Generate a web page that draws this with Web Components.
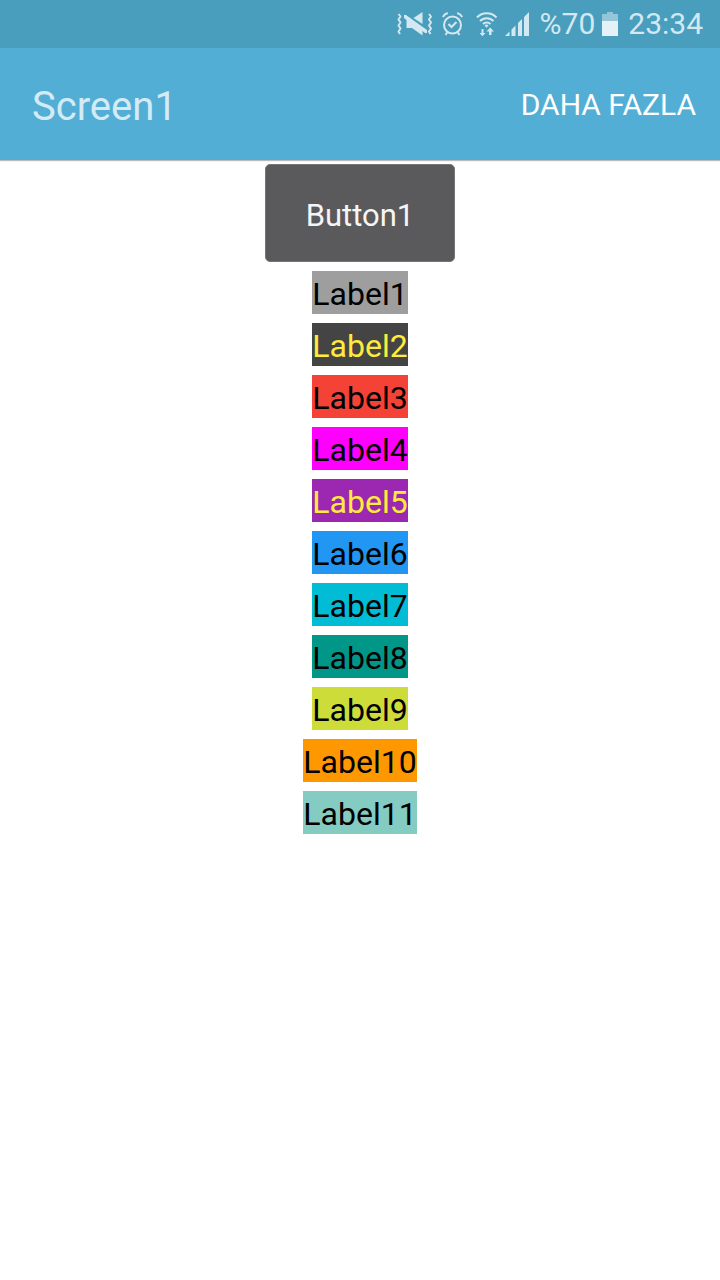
<!DOCTYPE html>
<html lang="tr">
<head>
<meta charset="utf-8">
<meta name="viewport" content="width=device-width, initial-scale=1">
<title>Screen1</title>
<style>
    body {
        margin: 0;
        background: #fff;
        color: #000;
        font-family: Roboto, "Liberation Sans", sans-serif;
    }
</style>
</head>
<body>
<app-screen>
    <status-bar slot="top" battery="%70" time="23:34"></status-bar>
    <title-bar slot="top" heading="Screen1">DAHA FAZLA</title-bar>

    <app-button>Button1</app-button>
    <color-label color="#9e9e9e">Label1</color-label>
    <color-label color="#444444" text="#ffeb3b">Label2</color-label>
    <color-label color="#f44336">Label3</color-label>
    <color-label color="#ff00ff">Label4</color-label>
    <color-label color="#9c27b0" text="#ffeb3b">Label5</color-label>
    <color-label color="#2196f3">Label6</color-label>
    <color-label color="#00bcd4">Label7</color-label>
    <color-label color="#009688">Label8</color-label>
    <color-label color="#cddc39">Label9</color-label>
    <color-label color="#ff9800">Label10</color-label>
    <color-label color="#84ccc2">Label11</color-label>
</app-screen>

<script>
/**
 * Screen: bars on top, centered column of components below
 */
class AppScreen extends HTMLElement {
    constructor() {
        super();
        this.attachShadow({ mode: 'open' });
    }

    connectedCallback() {
        this.shadowRoot.innerHTML = `
            <style>
                :host {
                    display: flex;
                    flex-direction: column;
                    min-height: 100vh;
                }

                main {
                    display: flex;
                    flex-direction: column;
                    align-items: center;
                    gap: 9px;
                    padding: 4px 0;
                }
            </style>

            <header><slot name="top"></slot></header>
            <main><slot></slot></main>
        `;
    }
}

/**
 * Phone status bar with icons, battery level and clock
 */
class StatusBar extends HTMLElement {
    constructor() {
        super();
        this.attachShadow({ mode: 'open' });
    }

    connectedCallback() {
        this.shadowRoot.innerHTML = `
            <style>
                :host {
                    display: flex;
                    align-items: center;
                    justify-content: flex-end;
                    height: 48px;
                    padding-right: 17px;
                    background: #499dbd;
                    color: #d3e8f0;
                    font-size: 30px;
                    line-height: 48px;
                }

                svg {
                    flex: none;
                    fill: currentColor;
                }

                .line {
                    fill: none;
                    stroke: currentColor;
                    stroke-width: 2;
                }

                .alarm { margin-left: 8px; }
                .wifi { margin-left: 12px; }
                .signal { margin: 0 11px 0 7px; }
                .battery { margin: 0 10px 0 7px; }
            </style>

            <svg class="mute" width="37" height="48" viewBox="0 0 37 48" aria-hidden="true">
                <path class="line" stroke-linejoin="round" d="M1.500 14l2 2.500-2 3 2 3-2 3 2 3-2 3 1.500 2.500M32 14l2 2.500-2 3 2 3-2 3 2 3-2 3 1.500 2.500"/>
                <path d="M16.500 18l9-6v12zM7 15h2l21 15v3h-2l-2.500-2v4.500L15 28H9.500v-8L7 18z"/>
            </svg>
            <svg class="alarm" width="22" height="48" viewBox="0 0 22 48" aria-hidden="true">
                <circle class="line" cx="10.500" cy="25" r="8.500"/>
                <path class="line" d="M6.500 24l3 3 5-5M.800 17a8 8 0 0 1 5-4M20.200 17a8 8 0 0 0-5-4M5.500 32l-2 3M15.500 32l2 3"/>
            </svg>
            <svg class="wifi" width="22" height="48" viewBox="0 0 22 48" aria-hidden="true">
                <path class="line" d="M1 17.500a13.500 13.500 0 0 1 19.500 0M4 21a9.500 9.500 0 0 1 13.500 0M7 24a5.300 5.300 0 0 1 7.500 0"/>
                <path d="M8.500 25.500a3 3 0 0 1 4 0l-2 2.200zM5.500 29h2v4H9.500l-3 3.300-3-3.300h2zM13 35h2.500v-3.500H18L14.200 27.500l-3.700 4H13z"/>
            </svg>
            <svg class="signal" width="24" height="48" viewBox="0 0 24 48" aria-hidden="true">
                <path d="M0 36l4.500-4.500V36zM6.500 36v-6.500l4-4V36zM13 36V23l4-4v17zM19 36V17l5-5v24z"/>
            </svg>
            <span>${this.getAttribute('battery')}</span>
            <svg class="battery" width="16" height="48" viewBox="0 0 16 48" aria-hidden="true">
                <path fill="#94c5d8" d="M0 14h5v-2h6v2h5v7H0z"/>
                <path fill="#e4f1f6" d="M0 21h16v15H0z"/>
            </svg>
            <time>${this.getAttribute('time')}</time>
        `;
    }
}

/**
 * Title bar with heading and menu button
 */
class TitleBar extends HTMLElement {
    constructor() {
        super();
        this.attachShadow({ mode: 'open' });
    }

    connectedCallback() {
        this.shadowRoot.innerHTML = `
            <style>
                :host {
                    display: flex;
                    align-items: center;
                    justify-content: space-between;
                    height: 112px;
                    padding: 0 24px 0 32px;
                    background: #53aed6;
                    box-shadow: 0 1px 1px #bbb;
                }

                h1 {
                    margin: 0;
                    padding-top: 6px;
                    color: #d4ebf5;
                    font-size: 40px;
                    font-weight: 400;
                    line-height: 48px;
                }

                button {
                    padding: 0;
                    border: 0;
                    background: none;
                    color: #fff;
                    font: inherit;
                    font-size: 30px;
                    cursor: pointer;
                }
            </style>

            <h1>${this.getAttribute('heading')}</h1>
            <button type="button"><slot></slot></button>
        `;
    }
}

/**
 * Dark push button
 */
class AppButton extends HTMLElement {
    constructor() {
        super();
        this.attachShadow({ mode: 'open' });
    }

    connectedCallback() {
        this.shadowRoot.innerHTML = `
            <style>
                :host {
                    display: block;
                }

                button {
                    display: block;
                    padding: 31px 40px 25px;
                    border: 1px solid #767677;
                    border-radius: 5px;
                    background: #5a5a5c;
                    color: #f5f5f5;
                    font: inherit;
                    font-size: 31px;
                    line-height: 40px;
                    cursor: pointer;
                }

                button:active {
                    background: #464648;
                }
            </style>

            <button type="button"><slot></slot></button>
        `;
    }
}

/**
 * Text label with its own background and text color
 */
class ColorLabel extends HTMLElement {
    constructor() {
        super();
        this.attachShadow({ mode: 'open' });
    }

    connectedCallback() {
        this.shadowRoot.innerHTML = `
            <style>
                :host {
                    display: block;
                    padding-top: 4px;
                    background: ${this.getAttribute('color')};
                    color: ${this.getAttribute('text') || '#000'};
                    font-size: 32px;
                    line-height: 39px;
                }
            </style>

            <slot></slot>
        `;
    }
}

customElements.define('app-screen', AppScreen);
customElements.define('status-bar', StatusBar);
customElements.define('title-bar', TitleBar);
customElements.define('app-button', AppButton);
customElements.define('color-label', ColorLabel);
</script>
</body>
</html>
